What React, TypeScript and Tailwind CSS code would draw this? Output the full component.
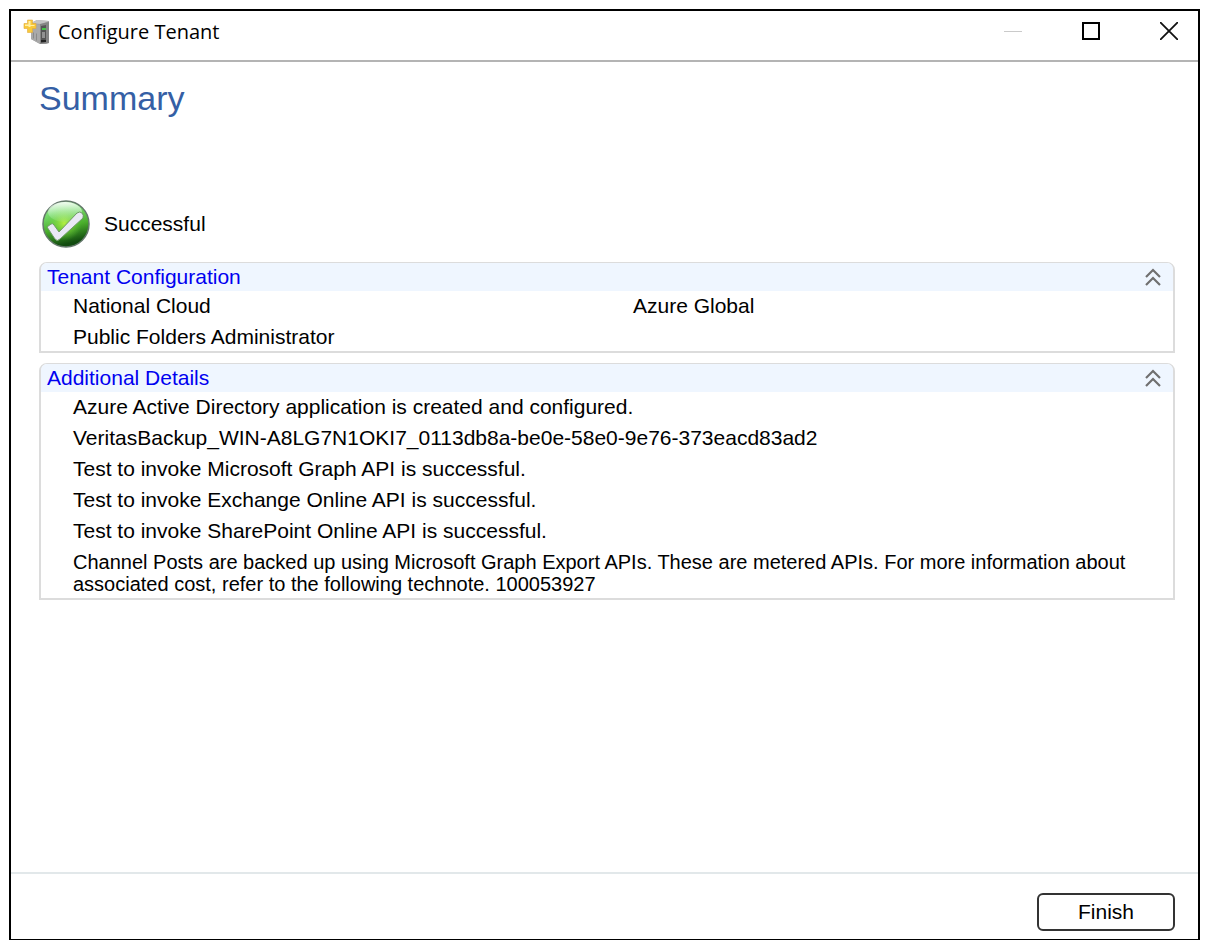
import { useState, type ReactNode } from "react";

const TENANT_ROWS = [
  { label: "National Cloud", value: "Azure Global" },
  { label: "Public Folders Administrator", value: "" },
];

const DETAILS = [
  "Azure Active Directory application is created and configured.",
  "VeritasBackup_WIN-A8LG7N1OKI7_0113db8a-be0e-58e0-9e76-373eacd83ad2",
  "Test to invoke Microsoft Graph API is successful.",
  "Test to invoke Exchange Online API is successful.",
  "Test to invoke SharePoint Online API is successful.",
];

function ServerIcon() {
  return (
    <svg viewBox="0 0 28 26" className="h-[26px] w-7" aria-hidden>
      <path d="M8 4 14 1 26 2v22l-3 1h-6l-9-5z" fill="#a3a3a3" />
      <path d="M8 4 14 1 26 2l-8 3z" fill="#c4c4c4" />
      <path d="M8 4l9 2v19l-9-5z" fill="#a9a9a9" />
      <path d="M10 13l1 1v6l-1-1zM13 14l1 1v7l-1-1z" fill="#8a8a8a" />
      <path d="M17 5l9-2v21l-9 1z" fill="#858585" />
      <path d="M18 7l5-1v17l-5 1z" fill="#555" />
      <path d="M19 9h4v2h-4z" fill="#43c447" />
      <path d="M19 13h3v6h-3z" fill="#929292" />
      <path d="M18 21h5v2h-5z" fill="#222" />
      <path
        d="M4.500 1h5v3.500h3.500v5h-3.500v4h-5v-4H1v-5h3.500z"
        fill="#f8c93a"
        stroke="#e2a93a"
        strokeWidth="0.6"
      />
      <path d="M5.500 2h2v4h4v1h-4v1h-2V7H2V5.500h3.500z" fill="#fff0a5" />
    </svg>
  );
}

function SuccessIcon() {
  return (
    <svg viewBox="0 0 48 48" className="size-12" aria-hidden>
      <defs>
        <linearGradient id="ball" x1="0" y1="0" x2="0.25" y2="1">
          <stop offset="0" stopColor="#c9efc9" />
          <stop offset="0.3" stopColor="#79dc70" />
          <stop offset="0.65" stopColor="#4aae2c" />
          <stop offset="1" stopColor="#124c10" />
        </linearGradient>
        <radialGradient id="glow" cx="0.46" cy="0.48" r="0.4">
          <stop offset="0" stopColor="#b5ef43" />
          <stop offset="1" stopColor="#63d33c" stopOpacity="0" />
        </radialGradient>
        <linearGradient id="shine" x1="0" y1="0" x2="0" y2="1">
          <stop offset="0" stopColor="#fff" stopOpacity="0.85" />
          <stop offset="1" stopColor="#bff5bd" stopOpacity="0.1" />
        </linearGradient>
      </defs>
      <circle cx="24" cy="24" r="23" fill="url(#ball)" stroke="#64786b" strokeWidth="1.5" />
      <circle cx="24" cy="24" r="22" fill="url(#glow)" />
      <ellipse cx="23" cy="12" rx="17" ry="10" fill="url(#shine)" />
      <path
        d="M5 27l4-3q2-1 3 1l5 7L35 13q3-2 5 0t1 5L18 39q-3 3-5 0z"
        fill="#e9e9f4"
        stroke="#6f9b66"
        strokeWidth="1"
      />
    </svg>
  );
}

function Panel({ title, children }: { title: string; children: ReactNode }) {
  const [open, setOpen] = useState(true);

  return (
    <section className="rounded-t-lg border-2 border-t border-[#dcdcdc]">
      <div className="flex h-7 items-center justify-between rounded-t-md bg-[#eff6ff] pr-3 pl-1.5">
        <h2 className="text-[#0000f0]">{title}</h2>
        <button
          type="button"
          aria-label={`Toggle ${title}`}
          aria-expanded={open}
          onClick={() => setOpen(!open)}
          className={open ? "" : "rotate-180"}
        >
          <svg
            viewBox="0 0 16 20"
            className="h-5 w-4"
            fill="none"
            stroke="#707070"
            strokeWidth="2.2"
            aria-hidden
          >
            <path d="M1 10l7-7 7 7M1 18l7-7 7 7" />
          </svg>
        </button>
      </div>
      {open && children}
    </section>
  );
}

export default function App() {
  return (
    <div className="flex min-h-screen flex-col bg-white pt-[9px] pr-2 pb-1 pl-[9px] font-['Liberation_Sans',Arial,sans-serif] text-[21px] leading-[22px] text-black">
      <div className="flex flex-1 flex-col border-2 border-b border-black">
        <header className="flex h-[51px] items-center justify-between border-b-2 border-[#b4b4b4] pr-5 pb-2 pl-3">
          <div className="flex items-center gap-[7px]">
            <ServerIcon />
            <span className="font-['Open_Sans','Noto_Sans',sans-serif] text-xl leading-7">
              Configure Tenant
            </span>
          </div>
          <div className="flex items-center gap-[60px] pb-0.5">
            <button type="button" aria-label="Minimize" disabled>
              <svg viewBox="0 0 18 18" className="size-[18px]" aria-hidden>
                <path d="M0 9.5h18" stroke="#cacaca" />
              </svg>
            </button>
            <button type="button" aria-label="Maximize">
              <svg viewBox="0 0 18 18" className="size-[18px]" aria-hidden>
                <path d="M1 1h16v16H1z" fill="none" stroke="#000" strokeWidth="2" />
              </svg>
            </button>
            <button type="button" aria-label="Close">
              <svg viewBox="0 0 18 18" className="size-[18px]" aria-hidden>
                <path d="M0 0l18 18M18 0L0 18" stroke="#111" strokeWidth="1.8" />
              </svg>
            </button>
          </div>
        </header>

        <main className="flex-1 pr-[23px] pb-6 pl-7">
          <h1 className="pt-4 text-[34px] leading-10 text-[#355fa5]">Summary</h1>

          <div className="mt-[82px] flex items-center gap-3.5 pl-[3px]">
            <SuccessIcon />
            <p>Successful</p>
          </div>

          <div className="mt-3.5 flex flex-col gap-2.5">
            <Panel title="Tenant Configuration">
              <dl className="flex flex-col gap-[9px] pt-1 pr-2 pb-[3px] pl-8">
                {TENANT_ROWS.map((row) => (
                  <div key={row.label} className="grid grid-cols-2">
                    <dt>{row.label}</dt>
                    <dd className="pl-3.5">{row.value}</dd>
                  </div>
                ))}
              </dl>
            </Panel>
            <Panel title="Additional Details">
              <div className="flex flex-col gap-[9px] pt-1 pr-2 pb-[3px] pl-8">
                {DETAILS.map((line) => (
                  <p key={line}>{line}</p>
                ))}
                <p className="text-xl leading-[22px]">
                  Channel Posts are backed up using Microsoft Graph Export APIs. These are
                  metered APIs. For more information about associated cost, refer to the
                  following technote. 100053927
                </p>
              </div>
            </Panel>
          </div>
        </main>

        <footer className="flex justify-end border-t-2 border-[#e2e8ea] pt-[19px] pr-[23px] pb-2">
          <button
            type="button"
            className="h-[38px] w-[138px] rounded-md border-2 border-[#333] bg-white"
          >
            Finish
          </button>
        </footer>
      </div>
    </div>
  );
}
